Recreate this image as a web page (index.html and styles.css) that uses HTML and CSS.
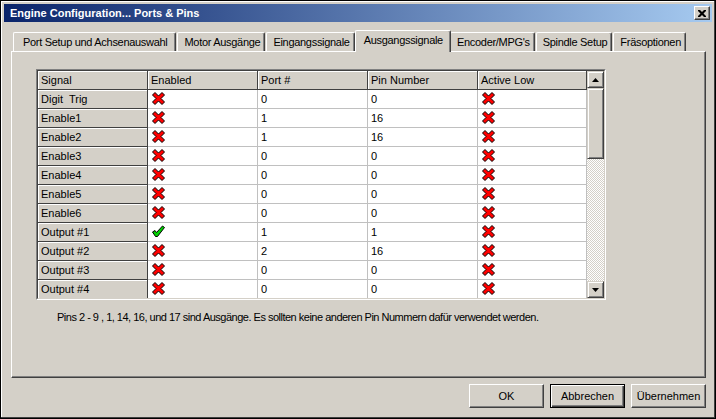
FILE: index.html
```html
<!DOCTYPE html>
<html>
<head>
<meta charset="utf-8">
<link rel="stylesheet" href="styles.css">
</head>
<body>
<svg class="defs" width="0" height="0">
  <defs>
    <symbol id="ix" viewBox="0 0 13 13">
      <polygon points="0.5,3 3,0.5 6.5,4 10,0.5 12.5,3 9,6.5 12.5,10 10,12.5 6.5,9 3,12.5 0.5,10 4,6.5" fill="#ff0000" stroke="#000" stroke-width="1" stroke-linejoin="round"/>
    </symbol>
    <symbol id="ick" viewBox="0 0 13 13">
      <polygon points="0.5,7 3,5.5 4.5,7.5 10.5,1 12.5,2.5 5.5,11.5 3.5,11.5" fill="#00d000" stroke="#000" stroke-width="1" stroke-linejoin="round"/>
    </symbol>
  </defs>
</svg>
<div class="window">
  <div class="titlebar">
    <span class="title">Engine Configuration... Ports &amp; Pins</span>
    <span class="close"><svg width="8" height="7" viewBox="0 0 8 7"><path d="M0 0h2l2 2 2-2h2v1l-2.5 2.5L8 6v1H6L4 5 2 7H0V6l2.5-2.5L0 1z" fill="#000"/></svg></span>
  </div>
  <div class="tabs">
    <div class="tab">Port Setup und Achsenauswahl</div>
    <div class="tab">Motor Ausgänge</div>
    <div class="tab">Eingangssignale</div>
    <div class="tab active">Ausgangssignale</div>
    <div class="tab">Encoder/MPG's</div>
    <div class="tab">Spindle Setup</div>
    <div class="tab">Fräsoptionen</div>
  </div>
  <div class="panel">
    <div class="grid">
      <div class="grid-inner">
        <div class="table">
          <div class="hc">Signal</div><div class="hc">Enabled</div><div class="hc">Port #</div><div class="hc">Pin Number</div><div class="hc">Active Low</div>

          <div class="rh">Digit&nbsp; Trig</div><div class="c"><svg class="ic"><use href="#ix"/></svg></div><div class="c">0</div><div class="c">0</div><div class="c"><svg class="ic"><use href="#ix"/></svg></div>
          <div class="rh">Enable1</div><div class="c"><svg class="ic"><use href="#ix"/></svg></div><div class="c">1</div><div class="c">16</div><div class="c"><svg class="ic"><use href="#ix"/></svg></div>
          <div class="rh">Enable2</div><div class="c"><svg class="ic"><use href="#ix"/></svg></div><div class="c">1</div><div class="c">16</div><div class="c"><svg class="ic"><use href="#ix"/></svg></div>
          <div class="rh">Enable3</div><div class="c"><svg class="ic"><use href="#ix"/></svg></div><div class="c">0</div><div class="c">0</div><div class="c"><svg class="ic"><use href="#ix"/></svg></div>
          <div class="rh">Enable4</div><div class="c"><svg class="ic"><use href="#ix"/></svg></div><div class="c">0</div><div class="c">0</div><div class="c"><svg class="ic"><use href="#ix"/></svg></div>
          <div class="rh">Enable5</div><div class="c"><svg class="ic"><use href="#ix"/></svg></div><div class="c">0</div><div class="c">0</div><div class="c"><svg class="ic"><use href="#ix"/></svg></div>
          <div class="rh">Enable6</div><div class="c"><svg class="ic"><use href="#ix"/></svg></div><div class="c">0</div><div class="c">0</div><div class="c"><svg class="ic"><use href="#ix"/></svg></div>
          <div class="rh">Output #1</div><div class="c"><svg class="ic"><use href="#ick"/></svg></div><div class="c">1</div><div class="c">1</div><div class="c"><svg class="ic"><use href="#ix"/></svg></div>
          <div class="rh">Output #2</div><div class="c"><svg class="ic"><use href="#ix"/></svg></div><div class="c">2</div><div class="c">16</div><div class="c"><svg class="ic"><use href="#ix"/></svg></div>
          <div class="rh">Output #3</div><div class="c"><svg class="ic"><use href="#ix"/></svg></div><div class="c">0</div><div class="c">0</div><div class="c"><svg class="ic"><use href="#ix"/></svg></div>
          <div class="rh">Output #4</div><div class="c"><svg class="ic"><use href="#ix"/></svg></div><div class="c">0</div><div class="c">0</div><div class="c"><svg class="ic"><use href="#ix"/></svg></div>
          <div class="rh"></div><div class="c"><svg class="ic"><use href="#ix"/></svg></div><div class="c"></div><div class="c"></div><div class="c"><svg class="ic"><use href="#ix"/></svg></div>
        </div>
        <div class="scrollbar">
          <div class="sbtn"><svg width="7" height="4" viewBox="0 0 7 4"><path d="M3.5 0L7 4H0z" fill="#000"/></svg></div>
          <div class="thumb"></div>
          <div class="track"></div>
          <div class="sbtn"><svg width="7" height="4" viewBox="0 0 7 4"><path d="M0 0h7L3.5 4z" fill="#000"/></svg></div>
        </div>
      </div>
    </div>
    <p class="note">Pins 2 - 9 , 1, 14, 16, und 17 sind Ausgänge. Es sollten keine anderen Pin Nummern dafür verwendet werden.</p>
  </div>
  <div class="buttons">
    <div class="btn">OK</div>
    <div class="btn default">Abbrechen</div>
    <div class="btn">Übernehmen</div>
  </div>
</div>
</body>
</html>
```

FILE: styles.css
```css
html, body {
  margin: 0;
  padding: 0;
  background: #d4d0c8;
}
body {
  font-family: "Liberation Sans", Arial, sans-serif;
  font-size: 11px;
  color: #000;
}
.defs {
  position: absolute;
  width: 0;
  height: 0;
}
.window {
  width: 716px;
  height: 419px;
  box-sizing: border-box;
  border: 1px solid #000;
  padding: 3px;
  background: #d4d0c8;
  box-shadow: inset -1px -1px #404040, inset 1px 1px #fff;
}
.titlebar {
  height: 18px;
  display: flex;
  align-items: center;
  justify-content: space-between;
  background: linear-gradient(to right, #0a246a, #a6caf0);
  padding: 0 2px 0 6px;
}
.title {
  color: #fff;
  font-weight: bold;
  font-size: 11px;
}
.close {
  width: 16px;
  height: 14px;
  box-sizing: border-box;
  display: flex;
  align-items: center;
  justify-content: center;
  background: #d4d0c8;
  border: 1px solid;
  border-color: #fff #404040 #404040 #fff;
  box-shadow: inset -1px -1px #808080;
}
.tabs {
  display: flex;
  align-items: flex-end;
  height: 21px;
  margin-top: 8px;
  padding-left: 9px;
  position: relative;
  z-index: 1;
}
.tab {
  height: 19px;
  box-sizing: border-box;
  padding: 0 4px 0 6px;
  line-height: 18px;
  white-space: nowrap;
  letter-spacing: -0.3px;
  border-top: 1px solid #fff;
  border-left: 1px solid #fff;
  border-right: 1px solid #404040;
  box-shadow: inset -1px 0 #808080;
  border-radius: 2px 2px 0 0;
  background: #d4d0c8;
}
.tab:first-child {
  padding: 0 8px 0 9px;
}
.tab + .tab {
  margin-left: 1px;
}
.tab.active {
  height: 22px;
  margin: 0 -1px -1px 0;
  padding: 0 7px 0 8px;
  line-height: 19px;
  position: relative;
}
.tab.active + .tab {
  margin-left: 0;
}
.panel {
  margin-left: 7px;
  width: 695px;
  height: 327px;
  box-sizing: border-box;
  border: 1px solid;
  border-color: #fff #404040 #404040 #fff;
  box-shadow: inset -1px -1px #808080;
  padding-top: 17px;
  padding-left: 24px;
}
.grid {
  width: 570px;
  height: 231px;
  box-sizing: border-box;
  border: 1px solid;
  border-color: #808080 #fff #fff #808080;
}
.grid-inner {
  display: flex;
  height: 100%;
  box-sizing: border-box;
  border: 1px solid;
  border-color: #404040 #d4d0c8 #d4d0c8 #404040;
  overflow: hidden;
}
.table {
  display: grid;
  grid-template-columns: 110px 110px 110px 110px 109px;
  grid-auto-rows: 19px;
  align-content: start;
  background: #fff;
  overflow: hidden;
}
.hc, .rh {
  background: #d4d0c8;
  border-right: 1px solid #404040;
  border-bottom: 1px solid #404040;
  box-shadow: inset 1px 1px #fff;
  padding-left: 3px;
  line-height: 18px;
  white-space: nowrap;
}
.c {
  background: #fff;
  border-right: 1px solid #c0c0c0;
  border-bottom: 1px solid #c0c0c0;
  padding-left: 3px;
  line-height: 18px;
  white-space: nowrap;
}
.ic {
  display: block;
  width: 13px;
  height: 13px;
  margin: 2px 0 0 1px;
}
.scrollbar {
  width: 17px;
  display: flex;
  flex-direction: column;
}
.sbtn, .thumb {
  box-sizing: border-box;
  background: #d4d0c8;
  border: 1px solid;
  border-color: #d4d0c8 #404040 #404040 #d4d0c8;
  box-shadow: inset 1px 1px #fff, inset -1px -1px #808080;
}
.sbtn {
  height: 17px;
  display: flex;
  align-items: center;
  justify-content: center;
}
.thumb {
  height: 71px;
}
.track {
  flex: 1;
  background: repeating-conic-gradient(#fff 0 25%, #d4d0c8 0 50%) 0 0 / 2px 2px;
}
.note {
  margin: 11px 0 0 21px;
  line-height: 13px;
  letter-spacing: -0.5px;
}
.buttons {
  display: flex;
  justify-content: flex-end;
  gap: 6px;
  margin-top: 6px;
  padding-right: 6px;
}
.btn {
  width: 75px;
  height: 24px;
  box-sizing: border-box;
  display: flex;
  align-items: center;
  justify-content: center;
  border: 1px solid;
  border-color: #fff #404040 #404040 #fff;
  box-shadow: inset -1px -1px #808080;
  background: #d4d0c8;
}
.btn.default {
  border: 1px solid #000;
  box-shadow: inset 1px 1px #fff, inset -1px -1px #404040, inset -2px -2px #808080;
}
```
